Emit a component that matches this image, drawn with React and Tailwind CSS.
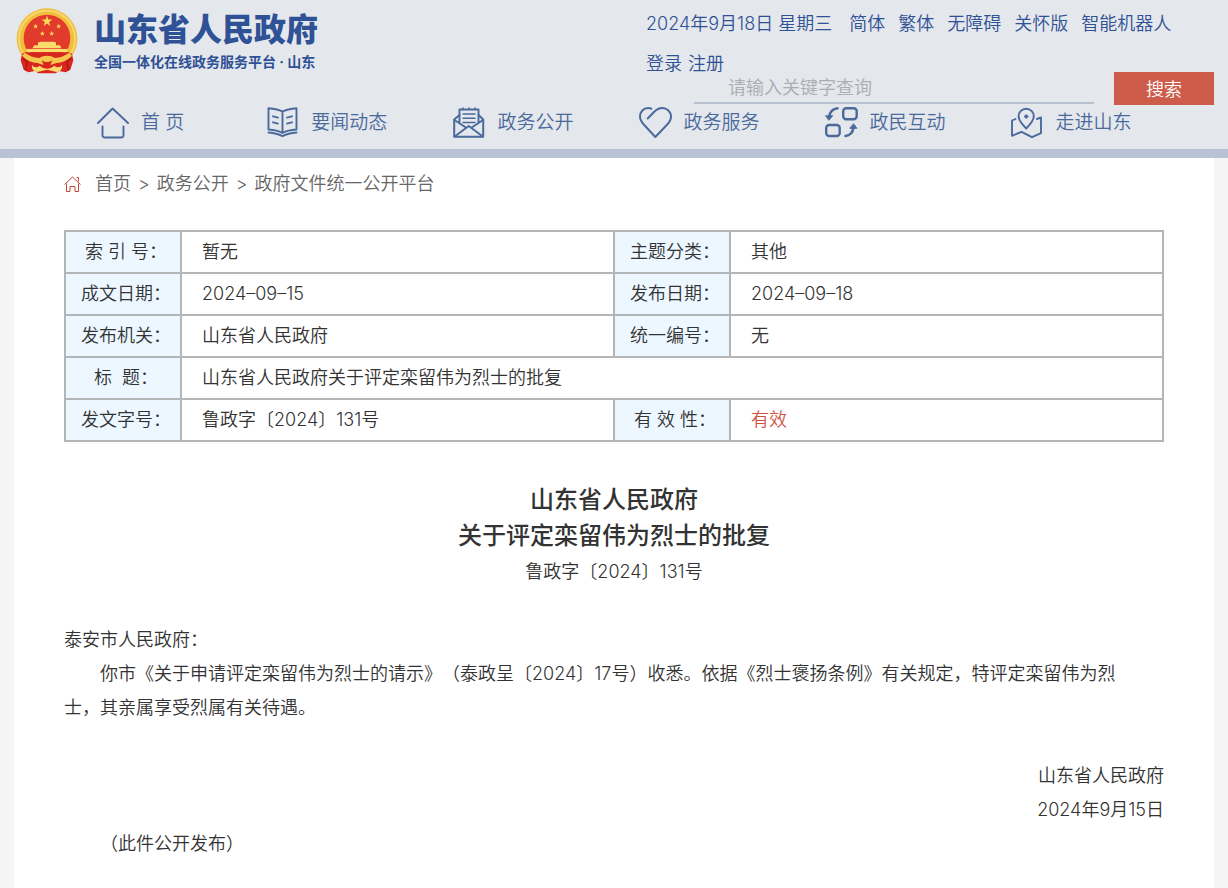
import { useState } from "react";

const topLinks = ["简体", "繁体", "无障碍", "关怀版", "智能机器人"];

const labelCell = "border-2 border-[#b2b6b6] bg-[#ecf7ff] pl-1.5 text-center font-[350]";
const valueCell = "border-2 border-[#b2b6b6] px-5 text-left";

function Emblem() {
  const star = "M0-10 2.4-3.2 9.5-3.1 3.8 1.2 5.9 8.1 0 4 -5.9 8.1 -3.8 1.2 -9.5-3.1 -2.4-3.2Z";
  return (
    <svg width="62" height="66" viewBox="18 9 186 198" aria-hidden="true">
      <circle cx="111" cy="101" r="91" fill="#f1bd3c" />
      <circle cx="111" cy="101" r="84" fill="none" stroke="#f8d76a" strokeWidth="6" />
      <circle cx="111" cy="99" r="70" fill="#e23a2b" />
      <path d="M36 146l14-6h122l14 6 4 20-9 28-14 8-20-4-10 7H85l-10-7-20 4-14-8-9-28Z" fill="#d8251f" />
      <path d="M44 143c14 9 26 15 44 16 13-9 33-9 46 0 18-1 30-7 44-16l8 9c-13 14-29 21-47 22-14 8-42 8-56 0-18-1-34-8-47-22Z" fill="#f5c84d" />
      <path d="M50 132h122v10H50zM72 121h78l4 9H68zM84 112h54v11H84zM90 110h42l3 5H87z" fill="#f9dc6b" />
      <path d="M60 142h102l-16 8H76z" fill="#d8251f" />
      <path d="M95 166c9 7 23 7 32 0l-6 14h-20Z" fill="#d8251f" />
      <path d="M66 180c6 8 14 9 23 2 13 12 31 12 44 0 9 7 17 6 23-2 2 12-5 20-16 21l-29-7-29 7c-11-1-18-9-16-21Z" fill="#f9dc6b" />
      <path d="M38 160l14 10-6 26M184 160l-14 10 6 26" fill="none" stroke="#a91714" strokeWidth="4" />
      <g fill="#fbd95c">
        <path d={star} transform="translate(111 49) scale(1.7)" />
        <path d={star} transform="translate(77 64) scale(.8)" />
        <path d={star} transform="translate(146 64) scale(.8)" />
        <path d={star} transform="translate(97 86) scale(.8)" />
        <path d={star} transform="translate(125 86) scale(.8)" />
      </g>
    </svg>
  );
}

function NavIcon({ children }) {
  return (
    <svg
      width="33"
      height="32"
      viewBox="0 0 33 32"
      fill="none"
      stroke="currentColor"
      strokeWidth="1.9"
      strokeLinecap="round"
      strokeLinejoin="round"
      className="shrink-0"
      aria-hidden="true"
    >
      {children}
    </svg>
  );
}

const navItems = [
  {
    label: "首 页",
    icon: <path d="M1 16 15.6 1.5 31 16M5.5 19.5V28a2.5 2.5 0 0 0 2.5 2.5h16a2.5 2.5 0 0 0 2.5-2.5v-8.5" />,
  },
  {
    label: "要闻动态",
    icon: (
      <path d="M15.5 4.5C11 2 6 1.8 1.5 1.2v21.3c5 .3 9.500 1 14 3.500 4.500-2.500 9-3.200 14-3.500V1.200C25 1.800 20 2 15.500 4.500ZM15.500 4.500V26M1.500 25.500c5 .3 10 1.500 14 3.700 4-2.200 9-3.400 14-3.700M6 9.300l5 1.300M6 15.300l5 1.300M20 10.600l5-1.300M20 16.600l5-1.300" />
    ),
  },
  {
    label: "政务公开",
    icon: (
      <>
        <path d="M6.500 8 1.200 12.500v17.300h29V12.500L25.500 8" strokeWidth="2" />
        <path d="M6.500 15.500V2.500h19v13M1.500 13l11.300 7.500M30 13l-11.300 7.500M2 29.300l13.700-10.300L29.500 29.300" />
        <path d="M10 7h12M10 11.200h12M10 15.400h12M10 1v1.500M16 1v1.500M22 1v1.500" strokeWidth="1.500" />
      </>
    ),
  },
  {
    label: "政务服务",
    icon: (
      <path
        d="M8.700 11.500 15 5c2.500-2.500 4.700-4 8.300-4C28 1 32 4.700 32 9.500c0 3.500-1.500 5.800-4 8.300L16.300 30 5 17.800C2.500 15 1 13 1 9.500 1 4.700 4.500 1 9 1c1.300 0 2.300.2 3.300.7"
        strokeWidth="2"
      />
    ),
  },
  {
    label: "政民互动",
    icon: (
      <>
        <g strokeWidth="2.400">
          <rect x="18.200" y="1.300" width="13.500" height="11" rx="3" />
          <rect x="1.200" y="18" width="13.500" height="11" rx="3" />
          <path d="M12.500 1.300C8 1.800 5 4.800 4.300 9.500M20.500 29c4.500-.5 7.300-3.500 8-8.500" />
        </g>
        <path d="M1 8.800h6.700L4 13ZM25.200 21.300h6.700L28.700 17Z" fill="currentColor" strokeWidth="1" />
      </>
    ),
  },
  {
    label: "走进山东",
    icon: (
      <>
        <path d="M15.200 21.500c-4-4-7.600-7.600-7.600-12.200a7.600 7.600 0 0 1 15.200 0c0 4.600-3.600 8.200-7.600 12.200Z" />
        <circle cx="15.200" cy="9.500" r="1.600" fill="currentColor" strokeWidth="1" />
        <path d="M4.500 12 1 13.500v15.300l9.500-4L21 30.200l9-4V10.500L26 12" />
      </>
    ),
  },
];

function Header() {
  const [keyword, setKeyword] = useState("");

  return (
    <header className="border-b-[9px] border-[#b8c3d5] bg-[#e4e7ec]">
      <div className="mx-auto max-w-[1200px]">
        <div className="flex justify-between">
          <a href="#" className="flex items-start gap-4 pt-2 pl-0.5 text-[#2f5195]">
            <Emblem />
            <div className="pt-1 font-bold">
              <h1 className="text-[32px] leading-9 font-black">山东省人民政府</h1>
              <p className="text-sm leading-7">全国一体化在线政务服务平台 · 山东</p>
            </div>
          </a>

          <div className="w-[568px] pt-1 leading-10 text-[#2f5195]">
            <div className="flex gap-x-[13px]">
              <span className="mr-1">2024年9月18日 星期三</span>
              {topLinks.map(t => <a key={t} href="#">{t}</a>)}
            </div>
            <div className="flex gap-x-1.5">
              <a href="#">登录</a>
              <a href="#">注册</a>
            </div>
            <form className="-mt-3 flex justify-end gap-5" onSubmit={e => e.preventDefault()}>
              <input
                type="text"
                aria-label="关键字"
                value={keyword}
                onChange={e => setKeyword(e.target.value)}
                placeholder="请输入关键字查询"
                className="h-8 w-[400px] border-b-2 border-[#b8bfcd] pt-0.5 pl-[34px] outline-none placeholder:text-[#aaadb2]"
              />
              <button type="submit" className="h-[33px] w-[100px] bg-[#cd5c4b] pt-0.5 leading-8 text-white">搜索</button>
            </form>
          </div>
        </div>

        <nav className="flex gap-[66px] pt-0.5 pb-2.5 pl-[83px] text-[19px] leading-8 text-[#4b6a9c]">
          {navItems.map(({ label, icon }) => (
            <a key={label} href="#" className="flex h-8 items-start gap-[11px] first:mr-[17px]">
              <NavIcon>{icon}</NavIcon>
              {label}
            </a>
          ))}
        </nav>
      </div>
    </header>
  );
}

function Breadcrumb() {
  return (
    <div className="flex items-center gap-3.5 py-[9px] leading-[34px] text-[#666]">
      <svg width="17" height="16" viewBox="0 0 17 16" fill="none" stroke="#c4473c" strokeWidth="1" aria-hidden="true">
        <path d="M.5 8.500 8.500 1l8 7.500M12.500 1.500h2v4M2.500 7.500v8h3.500v-5h5v5h3.500v-8" />
      </svg>
      <p className="flex gap-x-[7px]">
        <a href="#">首页</a>
        <span>&gt;</span>
        <a href="#">政务公开</a>
        <span>&gt;</span>
        <a href="#">政府文件统一公开平台</a>
      </p>
    </div>
  );
}

function InfoTable() {
  return (
    <table className="mt-5 w-full table-fixed border-collapse leading-10">
      <colgroup>
        <col className="w-[116px]" />
        <col />
        <col className="w-[116px]" />
        <col />
      </colgroup>
      <tbody>
        <tr>
          <th scope="row" className={labelCell}>索 引 号：</th>
          <td className={valueCell}>暂无</td>
          <th scope="row" className={labelCell}>主题分类：</th>
          <td className={valueCell}>其他</td>
        </tr>
        <tr>
          <th scope="row" className={labelCell}>成文日期：</th>
          <td className={valueCell}>2024–09–15</td>
          <th scope="row" className={labelCell}>发布日期：</th>
          <td className={valueCell}>2024–09–18</td>
        </tr>
        <tr>
          <th scope="row" className={labelCell}>发布机关：</th>
          <td className={valueCell}>山东省人民政府</td>
          <th scope="row" className={labelCell}>统一编号：</th>
          <td className={valueCell}>无</td>
        </tr>
        <tr>
          <th scope="row" className={labelCell}>标&nbsp; 题：</th>
          <td colSpan={3} className={valueCell}>山东省人民政府关于评定栾留伟为烈士的批复</td>
        </tr>
        <tr>
          <th scope="row" className={labelCell}>发文字号：</th>
          <td className={valueCell}>鲁政字〔2024〕131号</td>
          <th scope="row" className={labelCell}>有 效 性：</th>
          <td className={valueCell}><span className="text-[#d05243]">有效</span></td>
        </tr>
      </tbody>
    </table>
  );
}

function Article() {
  return (
    <article className="pt-10 pb-12 leading-[34px]">
      <div className="pb-[33px] text-center leading-9">
        <h2 className="text-2xl leading-9 font-medium">
          山东省人民政府<br />关于评定栾留伟为烈士的批复
        </h2>
        <p>鲁政字〔2024〕131号</p>
      </div>
      <p>泰安市人民政府：</p>
      <p className="pr-7 indent-9 [text-spacing-trim:space-all]">
        你市《关于申请评定栾留伟为烈士的请示》（泰政呈〔2024〕17号）收悉。依据《烈士褒扬条例》有关规定，特评定栾留伟为烈士，其亲属享受烈属有关待遇。
      </p>
      <div className="pt-[34px] text-right">
        <p>山东省人民政府</p>
        <p>2024年9月15日</p>
      </div>
      <p className="indent-9">（此件公开发布）</p>
    </article>
  );
}

export default function App() {
  return (
    <div lang="zh-CN" className="min-h-screen bg-[#f5f5f5] font-['Inter','Noto_Sans_CJK_SC',sans-serif] text-[18px] font-[350] text-[#333]">
      <Header />
      <main className="mx-auto min-h-[730px] max-w-[1200px] bg-white px-[50px]">
        <Breadcrumb />
        <InfoTable />
        <Article />
      </main>
    </div>
  );
}
